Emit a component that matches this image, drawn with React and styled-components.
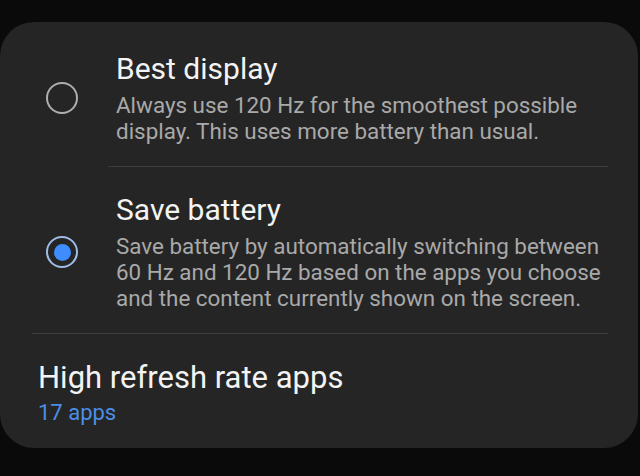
import React, { useState } from "react";
import styled, { createGlobalStyle } from "styled-components";

const GlobalStyle = createGlobalStyle`
  html, body {
    margin: 0;
    padding: 0;
    background: #0a0a0a;
  }
  body {
    font-family: Roboto, "Noto Sans", "Liberation Sans", sans-serif;
    -webkit-font-smoothing: antialiased;
  }
`;

const modes = [
  {
    id: "best",
    title: "Best display",
    desc: ["Always use 120 Hz for the smoothest possible", "display. This uses more battery than usual."],
  },
  {
    id: "save",
    title: "Save battery",
    desc: [
      "Save battery by automatically switching between",
      "60 Hz and 120 Hz based on the apps you choose",
      "and the content currently shown on the screen.",
    ],
  },
];

const App = () => {
  const [mode, setMode] = useState("save");

  return (
    <>
      <GlobalStyle />
      <Page>
        <Card>
          {modes.map((m, i) => (
            <React.Fragment key={m.id}>
              {i > 0 && <Divider $inset={108} />}
              <Option onClick={() => setMode(m.id)}>
                <Radio $checked={mode === m.id} />
                <OptionText>
                  <Title>{m.title}</Title>
                  <Desc>
                    {m.desc.map((line) => (
                      <div key={line}>{line}</div>
                    ))}
                  </Desc>
                </OptionText>
              </Option>
            </React.Fragment>
          ))}
          <Divider $inset={32} />
          <AppsRow>
            <AppsTitle>High refresh rate apps</AppsTitle>
            <AppsCount>17 apps</AppsCount>
          </AppsRow>
        </Card>
      </Page>
    </>
  );
};

export default App;

const Page = styled.div`
  width: 640px;
  height: 476px;
  padding-top: 22px;
  box-sizing: border-box;
  overflow: hidden;
`;

const Card = styled.div`
  width: 638px;
  height: 426px;
  box-sizing: border-box;
  padding-top: 4px;
  background: #252525;
  border-radius: 34px;
  display: flex;
  flex-direction: column;
`;

const Option = styled.div`
  display: flex;
  align-items: center;
  gap: 38px;
  padding: 26px 0 22px 46px;
  cursor: pointer;
`;

const Radio = styled.span`
  flex: none;
  width: 32px;
  height: 32px;
  border-radius: 50%;
  box-sizing: border-box;
  border: 2px solid ${(p) => (p.$checked ? "#9fbbe6" : "#aeaeae")};
  display: flex;
  align-items: center;
  justify-content: center;

  &::after {
    content: "";
    width: 17px;
    height: 17px;
    border-radius: 50%;
    background: #3f8cff;
    display: ${(p) => (p.$checked ? "block" : "none")};
  }
`;

const OptionText = styled.div`
  display: flex;
  flex-direction: column;
`;

const Title = styled.div`
  font-size: 30px;
  line-height: 34px;
  color: #f3f3f3;
  margin-bottom: 6px;
`;

const Desc = styled.div`
  font-size: 22.4px;
  line-height: 26px;
  color: #a9a9a9;
`;

const Divider = styled.div`
  height: 1px;
  background: #3d3d3d;
  margin: 0 30px 0 ${(p) => p.$inset}px;
`;

const AppsRow = styled.div`
  display: flex;
  flex-direction: column;
  padding: 26px 0 0 38px;
`;

const AppsTitle = styled.div`
  font-size: 31px;
  line-height: 36px;
  color: #f3f3f3;
  margin-bottom: 4px;
`;

const AppsCount = styled.div`
  font-size: 22px;
  line-height: 26px;
  color: #4a8ee6;
`;
